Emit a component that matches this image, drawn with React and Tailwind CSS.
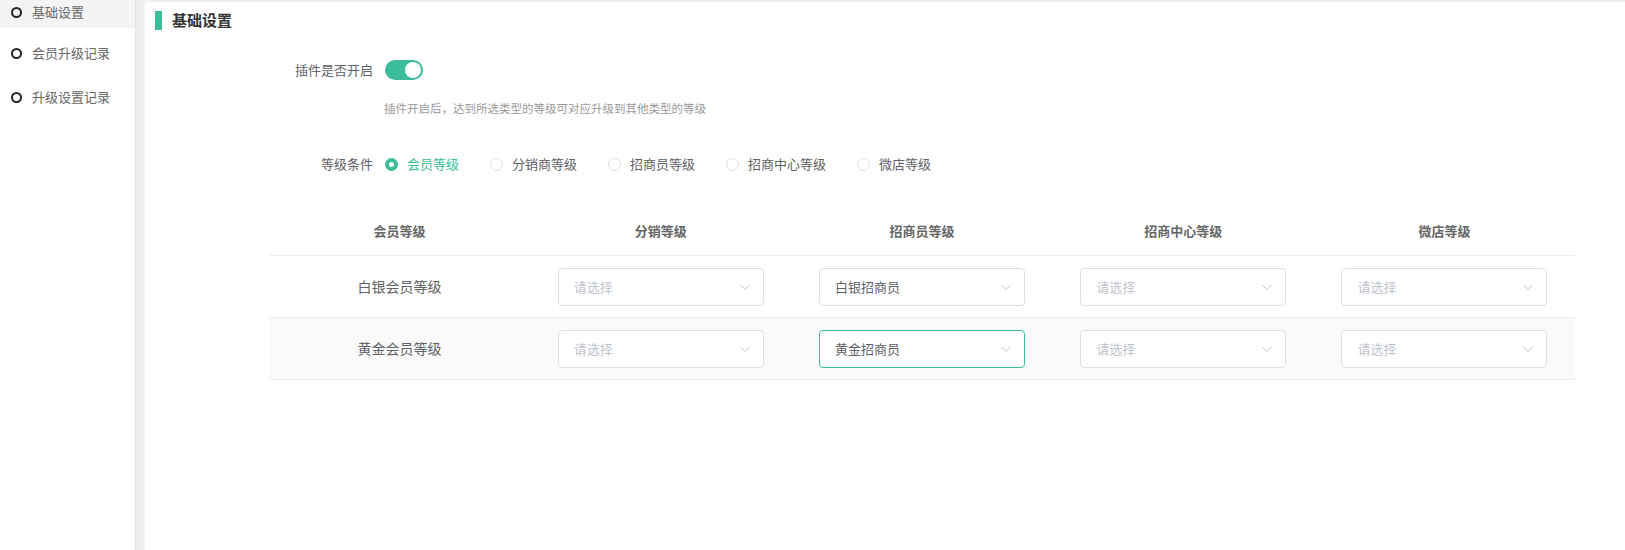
import React from "react";

const font = { fontFamily: '"Noto Sans CJK SC", "Noto Sans", sans-serif' };

function Chevron() {
  return (
    <svg width="12" height="12" viewBox="0 0 12 12" fill="none" className="shrink-0">
      <path d="M1.5 4 L6 8.5 L10.5 4" stroke="#c0c4cc" strokeWidth="1" />
    </svg>
  );
}

function Select({ value, active }) {
  return (
    <div
      className={`w-[206px] h-[38px] rounded-[4px] bg-white border flex items-center justify-between pl-[15px] pr-[12px] ${
        active ? "border-[#3bbc9a]" : "border-[#dcdfe6]"
      }`}
    >
      <span className={`text-[13px] ${value ? "text-[#606266]" : "text-[#c0c4cc]"}`}>
        {value || "请选择"}
      </span>
      <Chevron />
    </div>
  );
}

function Radio({ label, checked }) {
  return (
    <div className="flex items-center mr-[31px]">
      {checked ? (
        <span className="w-[13px] h-[13px] rounded-full bg-[#3bbc9a] flex items-center justify-center">
          <span className="w-[5px] h-[5px] rounded-full bg-white" />
        </span>
      ) : (
        <span className="w-[13px] h-[13px] rounded-full border border-[#dcdfe6] bg-white" />
      )}
      <span className={`ml-[9px] text-[13px] ${checked ? "text-[#3bbc9a]" : "text-[#606266]"}`}>{label}</span>
    </div>
  );
}

export default function App() {
  const headers = ["会员等级", "分销等级", "招商员等级", "招商中心等级", "微店等级"];
  const rows = [
    { name: "白银会员等级", vals: [null, "白银招商员", null, null], bg: "bg-white", active: -1 },
    { name: "黄金会员等级", vals: [null, "黄金招商员", null, null], bg: "bg-[#fafafa]", active: 1 },
  ];
  return (
    <div className="w-[1625px] h-[550px] flex bg-[#f0f0f0] overflow-hidden" style={font}>
      {/* sidebar */}
      <div className="w-[136px] h-full bg-white border-r border-[#e2e2e2] flex flex-col shrink-0">
        <div className="h-[28px] pb-[4px] bg-[#f4f4f4] flex items-center pl-[11px]">
          <span className="w-[11px] h-[11px] rounded-full border-2 border-[#222] shrink-0" />
          <span className="ml-[10px] text-[13px] text-[#666]">基础设置</span>
        </div>
        <div className="mt-[3px] h-[44px] flex items-center pl-[11px]">
          <span className="w-[11px] h-[11px] rounded-full border-2 border-[#222] shrink-0" />
          <span className="ml-[10px] text-[13px] text-[#666]">会员升级记录</span>
        </div>
        <div className="h-[44px] flex items-center pl-[11px]">
          <span className="w-[11px] h-[11px] rounded-full border-2 border-[#222] shrink-0" />
          <span className="ml-[10px] text-[13px] text-[#666]">升级设置记录</span>
        </div>
      </div>
      {/* gap shadow */}
      <div className="w-[9px] h-full bg-gradient-to-r from-[#e9e9e9] to-[#f3f3f3] shrink-0" />
      {/* main */}
      <div className="flex-1 mt-[2px] bg-white rounded-tl-[4px] flex flex-col">
        <div className="flex items-center h-[19px] pl-[10px] mt-[9px]">
          <span className="w-[7px] h-[19px] bg-[#3bbc9a]" />
          <span className="ml-[10px] text-[15px] font-bold text-[#333]">基础设置</span>
        </div>

        <div className="flex items-center h-[20px] mt-[30px]">
          <div className="w-[228px] text-right text-[13px] text-[#606266]">插件是否开启</div>
          <div className="ml-[12px] w-[38px] h-[20px] rounded-full bg-[#3bbc9a] flex items-center justify-end pr-[2px]">
            <span className="w-[16px] h-[16px] rounded-full bg-white" />
          </div>
        </div>
        <div className="ml-[239px] mt-[20px] text-[11.5px] leading-[17px] text-[#999]">
          插件开启后，达到所选类型的等级可对应升级到其他类型的等级
        </div>

        <div className="flex items-center h-[20px] mt-[37px]">
          <div className="w-[228px] text-right text-[13px] text-[#606266]">等级条件</div>
          <div className="ml-[12px] flex items-center">
            <Radio label="会员等级" checked />
            <Radio label="分销商等级" />
            <Radio label="招商员等级" />
            <Radio label="招商中心等级" />
            <Radio label="微店等级" />
          </div>
        </div>

        <div className="ml-[124px] w-[1306px] mt-[33px]">
          <div className="grid grid-cols-5 h-[49px] items-center border-b border-[#ebeef5]">
            {headers.map((h) => (
              <div key={h} className="text-center text-[13px] font-bold text-[#666]">
                {h}
              </div>
            ))}
          </div>
          {rows.map((r) => (
            <div key={r.name} className={`grid grid-cols-5 h-[62px] items-center border-b border-[#ebeef5] ${r.bg}`}>
              <div className="text-center text-[14px] text-[#606266]">{r.name}</div>
              {r.vals.map((v, i) => (
                <div key={i} className="flex justify-center">
                  <Select value={v} active={r.active === i} />
                </div>
              ))}
            </div>
          ))}
        </div>
      </div>
    </div>
  );
}
